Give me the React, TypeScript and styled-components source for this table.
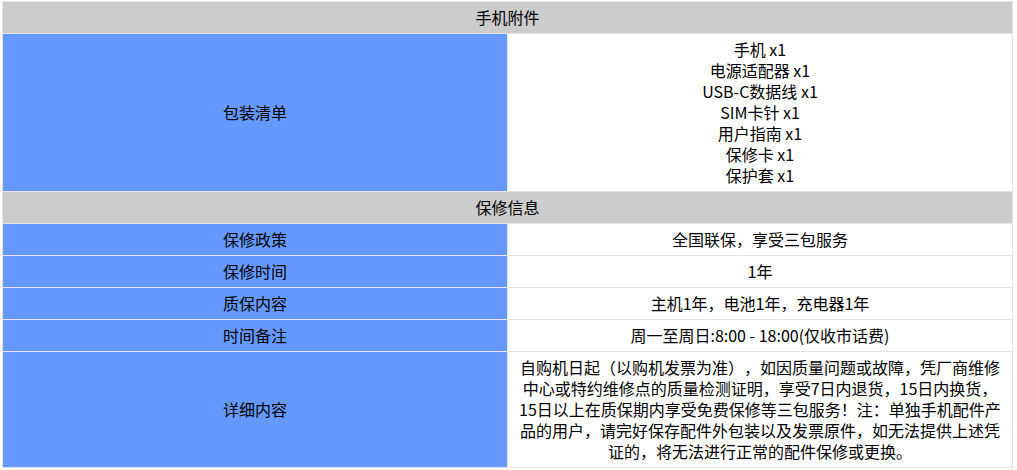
import React from "react";
import styled, { createGlobalStyle } from "styled-components";

const GlobalStyle = createGlobalStyle`
  html, body {
    margin: 0;
    padding: 0;
    background: #ffffff;
  }
  body {
    font-family: "Microsoft YaHei", "Noto Sans CJK SC", "Noto Sans", sans-serif;
    color: #000;
  }
`;

const Page = styled.div`
  padding: 1px 0 0 2px;
`;

const Table = styled.table`
  width: 1011px;
  border-collapse: collapse;
  border: 1px solid #dcdcdc;
  table-layout: fixed;
  font-size: 16px;
  line-height: 21px;
  text-spacing-trim: space-all;
`;

const SectionCell = styled.th`
  background: #cccccc;
  font-weight: normal;
  text-align: center;
  padding: 5px 10px;
  border: 1px solid #e4e4e4;
`;

const LabelCell = styled.td`
  background: #6699ff;
  text-align: center;
  vertical-align: middle;
  padding: 5px 10px;
  border: 1px solid #e4e4e4;
  width: 50%;
`;

const ValueCell = styled.td`
  background: #ffffff;
  text-align: center;
  vertical-align: middle;
  padding: 5px 10px;
  border: 1px solid #e4e4e4;
  text-spacing-trim: space-all;
`;

const ListLine = styled.div`
  white-space: nowrap;
`;

type Row = { label: string; value: string };

const packageItems = [
  "手机 x1",
  "电源适配器 x1",
  "USB-C数据线 x1",
  "SIM卡针 x1",
  "用户指南 x1",
  "保修卡 x1",
  "保护套 x1",
];

const warrantyRows: Row[] = [
  { label: "保修政策", value: "全国联保，享受三包服务" },
  { label: "保修时间", value: "1年" },
  { label: "质保内容", value: "主机1年，电池1年，充电器1年" },
  { label: "时间备注", value: "周一至周日:8:00 - 18:00(仅收市话费)" },
  {
    label: "详细内容",
    value:
      "自购机日起（以购机发票为准），如因质量问题或故障，凭厂商维修中心或特约维修点的质量检测证明，享受7日内退货，15日内换货，15日以上在质保期内享受免费保修等三包服务！注：单独手机配件产品的用户，请完好保存配件外包装以及发票原件，如无法提供上述凭证的，将无法进行正常的配件保修或更换。",
  },
];

export default function App() {
  return (
    <>
      <GlobalStyle />
      <Page>
        <Table>
          <tbody>
            <tr>
              <SectionCell colSpan={2}>手机附件</SectionCell>
            </tr>
            <tr>
              <LabelCell>包装清单</LabelCell>
              <ValueCell>
                {packageItems.map((item) => (
                  <ListLine key={item}>{item}</ListLine>
                ))}
              </ValueCell>
            </tr>
            <tr>
              <SectionCell colSpan={2}>保修信息</SectionCell>
            </tr>
            {warrantyRows.map((row) => (
              <tr key={row.label}>
                <LabelCell>{row.label}</LabelCell>
                <ValueCell>{row.value}</ValueCell>
              </tr>
            ))}
          </tbody>
        </Table>
      </Page>
    </>
  );
}
